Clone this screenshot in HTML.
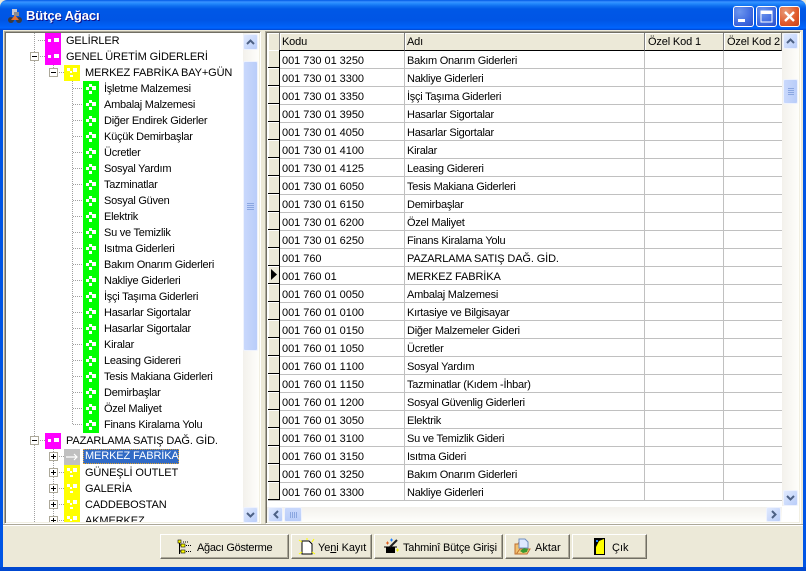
<!DOCTYPE html>
<html><head><meta charset="utf-8"><style>
html,body{margin:0;padding:0;background:#ece9d8}
#w{position:relative;width:806px;height:571px;overflow:hidden;background:#ece9d8;font:11px/16px "Liberation Sans",sans-serif;color:#000}
#w div{position:absolute;white-space:nowrap}
.tb{left:0;top:0;width:806px;height:30px;border-radius:7px 7px 0 0;background:linear-gradient(#0058e6 0,#3a93ff 2px,#288eff 3px,#0f6ff0 6px,#0058e6 9px,#0055e5 20px,#0060f5 26px,#0066ff 28px,#0043cf 30px)}
.bl{left:0;top:30px;width:3px;height:541px;background:#0055e5}.br{left:803px;top:30px;width:3px;height:541px;background:#0055e5}
.bb{left:0;top:567px;width:806px;height:4px;background:#0048d0}
.ttl{left:26px;top:7px;font:bold 13px/18px "Liberation Sans",sans-serif;color:#fff;text-shadow:1px 1px #0f1089;letter-spacing:-.1px}
.wb{top:6px;width:19px;height:19px;border:1px solid #fff;border-radius:3px;background:radial-gradient(circle at 30% 25%,#6d96ee,#3f6ae0 60%,#2a4fc8)}
.sunk{box-sizing:border-box;border:1px solid #aca899;border-right-color:#fff;border-bottom-color:#fff;box-shadow:inset 1px 1px #716f64,inset -1px -1px #f1efe2}
.t{line-height:16px;letter-spacing:-.25px}
.u{letter-spacing:-.12px}
.vb{background:linear-gradient(90deg,#f3f1ec,#fefefb)}.hb{background:linear-gradient(#f3f1ec,#fefefb)}
.ab{width:15px;height:16px;box-sizing:border-box;border:1px solid #eef2fd;border-radius:2px;background:linear-gradient(135deg,#e0e9fe,#b9cdf9)}
.th{background:#ece9d8;border-right:1px solid #808080;border-bottom:1px solid #000;box-shadow:inset 1px 1px #fff;box-sizing:border-box;height:18px;top:33px;padding-left:2px;line-height:18px;letter-spacing:-.15px}
.r{left:268px;width:514px;height:18px;background:#fff;border-bottom:1px solid #c0c0c0;box-sizing:border-box}
.i{left:0;top:-1px;width:12px;height:18px;box-sizing:border-box;background:#ece9d8;border-right:1px solid #000;border-bottom:1px solid #000;box-shadow:inset 1px 1px #fff}
.a{left:14px;top:2px;line-height:16px;font-kerning:none;letter-spacing:-.04px}.b{left:139px;top:2px;line-height:16px;letter-spacing:-.25px}
.b.u{letter-spacing:-.12px}
.c1{left:376px;top:0;width:1px;height:17px;background:#c0c0c0}.c2{left:455px;top:0;width:1px;height:17px;background:#c0c0c0}.c0{left:136px;top:0;width:1px;height:17px;background:#c0c0c0}
.btn{top:534px;height:25px;box-sizing:border-box;background:#ece9d8;border:1px solid;border-color:#fff #716f64 #716f64 #fff;box-shadow:inset -1px -1px #aca899}
.bt{top:5px;line-height:15px;font-size:11px;letter-spacing:-.15px}
</style></head><body><div id="w">
<div class="tb"></div><div class="bl"></div><div class="br"></div><div class="bb"></div>
<svg style="position:absolute;left:7px;top:8px" width="16" height="16" viewBox="0 0 16 16"><circle cx="4" cy="12" r="3" fill="#3a3a40"/><circle cx="12" cy="12" r="3" fill="#3a3a40"/><path d="M4 12L8 7l4 5z" fill="#e8702a"/><rect x="5" y="1" width="5" height="6" fill="#c8c8d0"/><rect x="7" y="4" width="5" height="4" fill="#8a8a90"/></svg>
<div class="ttl">Bütçe Ağacı</div>
<div class="wb" style="left:733px"><svg style="position:absolute;left:0;top:0" width="19" height="19"><rect x="4" y="12" width="7" height="3" fill="#fff"/></svg></div>
<div class="wb" style="left:756px"><svg style="position:absolute;left:0;top:0" width="19" height="19"><path d="M4 4h11v11H4z" fill="none" stroke="#fff"/><rect x="4" y="4" width="11" height="3" fill="#fff"/></svg></div>
<div class="wb" style="left:779px;background:radial-gradient(circle at 30% 25%,#e89a78,#e0582a 60%,#c8431a)"><svg style="position:absolute;left:0;top:0" width="19" height="19"><path d="M5 5l9 9M14 5l-9 9" stroke="#fff" stroke-width="2.4"/></svg></div>

<!-- tree -->
<div class="sunk" style="left:4px;top:31px;width:257px;height:493px"></div>
<div style="left:6px;top:33px;width:237px;height:489px;background:#fff;overflow:hidden">
<svg style="position:absolute;left:0;top:0" width="237" height="489" viewBox="6 33 237 489">
<defs>
<g id="g"><rect width="16" height="16" fill="#0f0"/><rect x="6" y="3" width="3" height="3" fill="#fff"/><rect x="3" y="6" width="3" height="3" fill="#fff"/><rect x="9" y="5" width="4" height="4" fill="#fff"/><rect x="6" y="10" width="3" height="3" fill="#fff"/></g>
<g id="y"><rect width="16" height="16" fill="#ff0"/><rect x="3" y="3" width="3" height="3" fill="#fff"/><rect x="6" y="6" width="2" height="2" fill="#fff"/><rect x="9" y="3" width="4" height="4" fill="#fff"/><rect x="6" y="10" width="3" height="2" fill="#fff"/></g>
<g id="p"><rect width="16" height="16" fill="#f0f"/><rect x="3" y="6" width="3" height="3" fill="#fff"/><rect x="9" y="5" width="5" height="4" fill="#fff"/></g>
<g id="m"><rect x=".5" y=".5" width="8" height="8" fill="#fff" stroke="#aca899"/><rect x="2" y="4" width="5" height="1" fill="#000"/></g>
<g id="e"><rect x=".5" y=".5" width="8" height="8" fill="#fff" stroke="#aca899"/><rect x="2" y="4" width="5" height="1" fill="#000"/><rect x="4" y="2" width="1" height="5" fill="#000"/></g>
</defs>
<g stroke="#a0a0a0" stroke-dasharray="1 1" fill="none">
<path d="M34.500 33V522M53.500 65V73M72.500 81V424M53.500 449V522M38 40.500h7M38 56.500h7M38 440.500h7M57 72.500h7M57 456.500h7M57 472.500h7M57 488.500h7M57 504.500h7M57 520.500h7"/>
<path d="M73 88.500h10M73 104.500h10M73 120.500h10M73 136.500h10M73 152.500h10M73 168.500h10M73 184.500h10M73 200.500h10M73 216.500h10M73 232.500h10M73 248.500h10M73 264.500h10M73 280.500h10M73 296.500h10M73 312.500h10M73 328.500h10M73 344.500h10M73 360.500h10M73 376.500h10M73 392.500h10M73 408.500h10M73 424.500h10"/>
</g>
<use href="#p" x="45" y="33"/><use href="#p" x="45" y="49"/><use href="#m" x="30" y="52"/>
<use href="#y" x="64" y="65"/><use href="#m" x="49" y="68"/>
<use href="#g" x="83" y="81"/><use href="#g" x="83" y="97"/><use href="#g" x="83" y="113"/><use href="#g" x="83" y="129"/><use href="#g" x="83" y="145"/><use href="#g" x="83" y="161"/><use href="#g" x="83" y="177"/><use href="#g" x="83" y="193"/><use href="#g" x="83" y="209"/><use href="#g" x="83" y="225"/><use href="#g" x="83" y="241"/><use href="#g" x="83" y="257"/><use href="#g" x="83" y="273"/><use href="#g" x="83" y="289"/><use href="#g" x="83" y="305"/><use href="#g" x="83" y="321"/><use href="#g" x="83" y="337"/><use href="#g" x="83" y="353"/><use href="#g" x="83" y="369"/><use href="#g" x="83" y="385"/><use href="#g" x="83" y="401"/><use href="#g" x="83" y="417"/>
<use href="#p" x="45" y="433"/><use href="#m" x="30" y="436"/>
<rect x="64" y="449" width="16" height="16" fill="#c0c0c0"/><path d="M66 457h11M74 454l3 3-3 3" stroke="#fff" stroke-width="1.2" fill="none"/><use href="#e" x="49" y="452"/>
<use href="#y" x="64" y="465"/><use href="#e" x="49" y="468"/>
<use href="#y" x="64" y="481"/><use href="#e" x="49" y="484"/>
<use href="#y" x="64" y="497"/><use href="#e" x="49" y="500"/>
<use href="#y" x="64" y="513"/><use href="#e" x="49" y="516"/>
</svg>
</div>
<div style="left:6px;top:33px;width:237px;height:489px;overflow:hidden">
<div class="t u" style="left:60px;top:0">GELİRLER</div>
<div class="t u" style="left:60px;top:16px">GENEL ÜRETİM GİDERLERİ</div>
<div class="t u" style="left:79px;top:32px">MERKEZ FABRİKA BAY+GÜN</div>
<div class="t" style="left:98px;top:48px">İşletme Malzemesi</div>
<div class="t" style="left:98px;top:64px">Ambalaj Malzemesi</div>
<div class="t" style="left:98px;top:80px">Diğer Endirek Giderler</div>
<div class="t" style="left:98px;top:96px">Küçük Demirbaşlar</div>
<div class="t" style="left:98px;top:112px">Ücretler</div>
<div class="t" style="left:98px;top:128px">Sosyal Yardım</div>
<div class="t" style="left:98px;top:144px">Tazminatlar</div>
<div class="t" style="left:98px;top:160px">Sosyal Güven</div>
<div class="t" style="left:98px;top:176px">Elektrik</div>
<div class="t" style="left:98px;top:192px">Su ve Temizlik</div>
<div class="t" style="left:98px;top:208px">Isıtma Giderleri</div>
<div class="t" style="left:98px;top:224px">Bakım Onarım Giderleri</div>
<div class="t" style="left:98px;top:240px">Nakliye Giderleri</div>
<div class="t" style="left:98px;top:256px">İşçi Taşıma Giderleri</div>
<div class="t" style="left:98px;top:272px">Hasarlar Sigortalar</div>
<div class="t" style="left:98px;top:288px">Hasarlar Sigortalar</div>
<div class="t" style="left:98px;top:304px">Kiralar</div>
<div class="t" style="left:98px;top:320px">Leasing Gidereri</div>
<div class="t" style="left:98px;top:336px">Tesis Makiana Giderleri</div>
<div class="t" style="left:98px;top:352px">Demirbaşlar</div>
<div class="t" style="left:98px;top:368px">Özel Maliyet</div>
<div class="t" style="left:98px;top:384px">Finans Kiralama Yolu</div>
<div class="t u" style="left:60px;top:400px">PAZARLAMA SATIŞ DAĞ. GİD.</div>
<div class="t u" style="left:77px;top:416px;width:96px;height:15px;box-sizing:border-box;background:#316ac5;color:#fff;outline:1px dotted #e0a030;outline-offset:-1px;padding-left:2px;line-height:15px">MERKEZ FABRİKA</div>
<div class="t u" style="left:79px;top:432px">GÜNEŞLİ OUTLET</div>
<div class="t u" style="left:79px;top:448px">GALERİA</div>
<div class="t u" style="left:79px;top:464px">CADDEBOSTAN</div>
<div class="t u" style="left:79px;top:480px">AKMERKEZ</div>
</div>
<!-- tree scroll -->
<div class="vb" style="left:243px;top:33px;width:16px;height:489px"></div>
<div class="ab" style="left:243px;top:34px"><svg style="position:absolute;left:2px;top:3px" width="9" height="8"><path d="M1 6l3.500-3.500L8 6" stroke="#4d6185" stroke-width="2" fill="none"/></svg></div>
<div class="ab" style="left:243px;top:61px;height:290px;background:linear-gradient(90deg,#c9d8fc,#b9cdf9)"></div>
<div class="ab" style="left:243px;top:507px"><svg style="position:absolute;left:2px;top:3px" width="9" height="8"><path d="M1 2l3.500 3.500L8 2" stroke="#4d6185" stroke-width="2" fill="none"/></svg></div>
<svg style="position:absolute;left:246px;top:202px" width="9" height="9"><path d="M1 1.500h7M1 3.500h7M1 5.500h7M1 7.500h7" stroke="#8aa6e0"/></svg>
<!-- splitter -->
<div style="left:261px;top:31px;width:4px;height:493px;background:#ece9d8"></div>
<!-- grid -->
<div class="sunk" style="left:265px;top:31px;width:536px;height:493px"></div>
<div style="left:267px;top:33px;width:532px;height:489px;background:#fff"></div>
<div class="th" style="left:268px;width:12px"></div>
<div class="th" style="left:280px;width:125px">Kodu</div>
<div class="th" style="left:405px;width:240px">Adı</div>
<div class="th" style="left:645px;width:79px;padding-left:3px">Özel Kod 1</div>
<div class="th" style="left:724px;width:58px;padding-left:3px">Özel Kod 2</div>
<div class="r" style="top:51px"><div class="i"></div><div class="a">001 730 01 3250</div><div class="c0"></div><div class="b">Bakım Onarım Giderleri</div><div class="c1"></div><div class="c2"></div></div>
<div class="r" style="top:69px"><div class="i"></div><div class="a">001 730 01 3300</div><div class="c0"></div><div class="b">Nakliye Giderleri</div><div class="c1"></div><div class="c2"></div></div>
<div class="r" style="top:87px"><div class="i"></div><div class="a">001 730 01 3350</div><div class="c0"></div><div class="b">İşçi Taşıma Giderleri</div><div class="c1"></div><div class="c2"></div></div>
<div class="r" style="top:105px"><div class="i"></div><div class="a">001 730 01 3950</div><div class="c0"></div><div class="b">Hasarlar Sigortalar</div><div class="c1"></div><div class="c2"></div></div>
<div class="r" style="top:123px"><div class="i"></div><div class="a">001 730 01 4050</div><div class="c0"></div><div class="b">Hasarlar Sigortalar</div><div class="c1"></div><div class="c2"></div></div>
<div class="r" style="top:141px"><div class="i"></div><div class="a">001 730 01 4100</div><div class="c0"></div><div class="b">Kiralar</div><div class="c1"></div><div class="c2"></div></div>
<div class="r" style="top:159px"><div class="i"></div><div class="a">001 730 01 4125</div><div class="c0"></div><div class="b">Leasing Gidereri</div><div class="c1"></div><div class="c2"></div></div>
<div class="r" style="top:177px"><div class="i"></div><div class="a">001 730 01 6050</div><div class="c0"></div><div class="b">Tesis Makiana Giderleri</div><div class="c1"></div><div class="c2"></div></div>
<div class="r" style="top:195px"><div class="i"></div><div class="a">001 730 01 6150</div><div class="c0"></div><div class="b">Demirbaşlar</div><div class="c1"></div><div class="c2"></div></div>
<div class="r" style="top:213px"><div class="i"></div><div class="a">001 730 01 6200</div><div class="c0"></div><div class="b">Özel Maliyet</div><div class="c1"></div><div class="c2"></div></div>
<div class="r" style="top:231px"><div class="i"></div><div class="a">001 730 01 6250</div><div class="c0"></div><div class="b">Finans Kiralama Yolu</div><div class="c1"></div><div class="c2"></div></div>
<div class="r" style="top:249px"><div class="i"></div><div class="a">001 760</div><div class="c0"></div><div class="b u">PAZARLAMA SATIŞ DAĞ. GİD.</div><div class="c1"></div><div class="c2"></div></div>
<div class="r" style="top:267px"><div class="i"><svg style="position:absolute;left:3px;top:3px" width="7" height="11"><path d="M0 0l6 5.500L0 11z" fill="#000"/></svg></div><div class="a">001 760 01</div><div class="c0"></div><div class="b u">MERKEZ FABRİKA</div><div class="c1"></div><div class="c2"></div></div>
<div class="r" style="top:285px"><div class="i"></div><div class="a">001 760 01 0050</div><div class="c0"></div><div class="b">Ambalaj Malzemesi</div><div class="c1"></div><div class="c2"></div></div>
<div class="r" style="top:303px"><div class="i"></div><div class="a">001 760 01 0100</div><div class="c0"></div><div class="b">Kırtasiye ve Bilgisayar</div><div class="c1"></div><div class="c2"></div></div>
<div class="r" style="top:321px"><div class="i"></div><div class="a">001 760 01 0150</div><div class="c0"></div><div class="b">Diğer Malzemeler Gideri</div><div class="c1"></div><div class="c2"></div></div>
<div class="r" style="top:339px"><div class="i"></div><div class="a">001 760 01 1050</div><div class="c0"></div><div class="b">Ücretler</div><div class="c1"></div><div class="c2"></div></div>
<div class="r" style="top:357px"><div class="i"></div><div class="a">001 760 01 1100</div><div class="c0"></div><div class="b">Sosyal Yardım</div><div class="c1"></div><div class="c2"></div></div>
<div class="r" style="top:375px"><div class="i"></div><div class="a">001 760 01 1150</div><div class="c0"></div><div class="b">Tazminatlar (Kıdem -İhbar)</div><div class="c1"></div><div class="c2"></div></div>
<div class="r" style="top:393px"><div class="i"></div><div class="a">001 760 01 1200</div><div class="c0"></div><div class="b">Sosyal Güvenlig Giderleri</div><div class="c1"></div><div class="c2"></div></div>
<div class="r" style="top:411px"><div class="i"></div><div class="a">001 760 01 3050</div><div class="c0"></div><div class="b">Elektrik</div><div class="c1"></div><div class="c2"></div></div>
<div class="r" style="top:429px"><div class="i"></div><div class="a">001 760 01 3100</div><div class="c0"></div><div class="b">Su ve Temizlik Gideri</div><div class="c1"></div><div class="c2"></div></div>
<div class="r" style="top:447px"><div class="i"></div><div class="a">001 760 01 3150</div><div class="c0"></div><div class="b">Isıtma Gideri</div><div class="c1"></div><div class="c2"></div></div>
<div class="r" style="top:465px"><div class="i"></div><div class="a">001 760 01 3250</div><div class="c0"></div><div class="b">Bakım Onarım Giderleri</div><div class="c1"></div><div class="c2"></div></div>
<div class="r" style="top:483px"><div class="i"></div><div class="a">001 760 01 3300</div><div class="c0"></div><div class="b">Nakliye Giderleri</div><div class="c1"></div><div class="c2"></div></div>
<!-- grid scrolls -->
<div class="vb" style="left:782px;top:33px;width:17px;height:473px"></div>
<div class="ab" style="left:783px;top:33px"><svg style="position:absolute;left:2px;top:3px" width="9" height="8"><path d="M1 6l3.500-3.500L8 6" stroke="#4d6185" stroke-width="2" fill="none"/></svg></div>
<div class="ab" style="left:783px;top:79px;height:25px;background:linear-gradient(90deg,#c9d8fc,#b9cdf9)"><svg style="position:absolute;left:3px;top:7px" width="8" height="9"><path d="M1 1.500h6M1 3.500h6M1 5.500h6M1 7.500h6" stroke="#8aa6e0"/></svg></div>
<div class="ab" style="left:783px;top:490px"><svg style="position:absolute;left:2px;top:3px" width="9" height="8"><path d="M1 2l3.500 3.500L8 2" stroke="#4d6185" stroke-width="2" fill="none"/></svg></div>
<div class="hb" style="left:267px;top:507px;width:515px;height:15px"></div>
<div class="ab" style="left:268px;top:507px;height:15px"><svg style="position:absolute;left:3px;top:2px" width="8" height="9"><path d="M6 1L2.500 4.500 6 8" stroke="#4d6185" stroke-width="2" fill="none"/></svg></div>
<div class="ab" style="left:284px;top:507px;width:18px;height:15px;background:linear-gradient(#c9d8fc,#b9cdf9)"><svg style="position:absolute;left:4px;top:3px" width="9" height="8"><path d="M1.500 1v6M3.500 1v6M5.500 1v6M7.500 1v6" stroke="#8aa6e0"/></svg></div>
<div class="ab" style="left:766px;top:507px;height:15px"><svg style="position:absolute;left:3px;top:2px" width="8" height="9"><path d="M2 1l3.500 3.500L2 8" stroke="#4d6185" stroke-width="2" fill="none"/></svg></div>
<!-- bottom -->
<div style="left:3px;top:524px;width:800px;height:1px;background:#aca899"></div>
<div style="left:3px;top:525px;width:800px;height:1px;background:#fff"></div>
<div class="btn" style="left:160px;width:129px"><svg style="position:absolute;left:16px;top:4px" width="16" height="16"><path d="M2.500 1v14M2.500 6h3M2.500 12h3" stroke="#000" fill="none"/><rect x="1" y="1" width="3" height="3" fill="#ff0" stroke="#000" stroke-width=".6"/><rect x="4" y="5" width="4" height="3" fill="#ff0" stroke="#000" stroke-width=".6"/><rect x="4" y="11" width="4" height="3" fill="#ff0" stroke="#000" stroke-width=".6"/><path d="M9 6.500h6M9 12.500h6M6 3h5" stroke="#000" stroke-dasharray="1 1"/></svg><div class="bt" style="left:36px;top:6px;letter-spacing:-.3px">Ağacı Gösterme</div></div>
<div class="btn" style="left:291px;width:81px"><svg style="position:absolute;left:6px;top:3px" width="18" height="18"><path d="M4 3h7l3 3v10H4z" fill="#fff" stroke="#000"/><path d="M1 2l3 2M16 1l-2 3M1 16l3-2M17 16l-3-2M9 0v2" stroke="#ff0"/></svg><div class="bt" style="left:26px;top:6px;letter-spacing:-.1px">Ye<u>n</u>i Kayıt</div></div>
<div class="btn" style="left:374px;width:129px"><svg style="position:absolute;left:7px;top:3px" width="18" height="18"><path d="M4 9h9v6H4z" fill="#000"/><path d="M2 9h13" stroke="#000"/><path d="M8 9l7-7" stroke="#222" stroke-width="2"/><path d="M4 5h3M5.500 3.500v3" stroke="#e06020"/><path d="M8 2h3M9.500 .5v3" stroke="#2080ff"/><path d="M14 12h3M15.500 10.500v3" stroke="#ee0"/></svg><div class="bt" style="left:28px;top:6px;letter-spacing:-.2px">Tahminî Bütçe Girişi</div></div>
<div class="btn" style="left:505px;width:65px"><svg style="position:absolute;left:8px;top:3px" width="18" height="18"><path d="M1 6h3l1-2h5v12H1z" fill="#f0c070" stroke="#c07030"/><path d="M5 1h6l3 3v6H5z" fill="#dfe8ff" stroke="#7090c0"/><path d="M3 15l3-4h10l-3 5H3z" fill="#f5d080" stroke="#c07030"/><path d="M6 13l4-3 4 1-1 3-4 1z" fill="#3a9a30"/></svg><div class="bt" style="left:29px;top:6px;letter-spacing:0">Aktar</div></div>
<div class="btn" style="left:572px;width:75px"><svg style="position:absolute;left:21px;top:3px" width="12" height="18"><rect x="0" y="0" width="11" height="17" fill="#000"/><path d="M5 3l5-2v15H2V9z" fill="#ff0"/><rect x="2" y="2" width="2" height="2" fill="#2080ff"/></svg><div class="bt" style="left:39px;top:6px;letter-spacing:0">Çık</div></div>
</div></body></html>
